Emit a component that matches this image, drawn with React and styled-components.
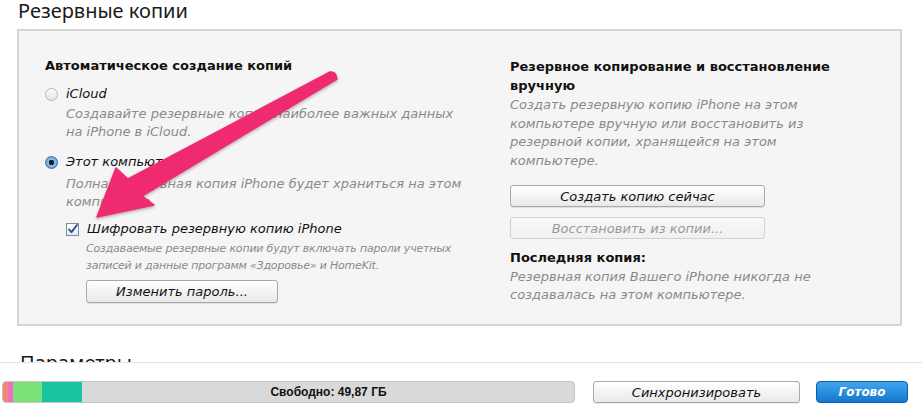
import styled, { createGlobalStyle } from "styled-components";

const Global = createGlobalStyle`
  html, body {
    margin: 0;
    padding: 0;
    background: #ffffff;
    overflow: hidden;
  }
  body {
    font-family: "DejaVu Sans", Verdana, sans-serif;
    color: #111;
  }
`

const Page = styled.div`
  position: relative;
  width: 922px;
  height: 413px;
  display: flex;
  flex-direction: column;
  overflow: hidden;
`

const Content = styled.div`
  height: 362px;
  overflow: hidden;
  flex-shrink: 0;
`

const Title = styled.h1`
  margin: 0 0 0 18px;
  font-family: "Noto Sans", "Open Sans", sans-serif;
  font-weight: 400;
  font-size: 20px;
  line-height: 22px;
  color: #1a1a1a;
`

const Panel = styled.div`
  margin: 7px 0 0 17px;
  width: 885px;
  height: 297px;
  box-sizing: border-box;
  background: #f5f5f5;
  border: 2px solid #d5d5d5;
  padding: 26px 0 0 26px;
  display: grid;
  grid-template-columns: 465px 1fr;
`

const Column = styled.div`
  display: flex;
  flex-direction: column;
  align-items: flex-start;
`

const Heading = styled.div`
  font-weight: 700;
  font-size: 13px;
  line-height: ${({ $lh }) => $lh || 18}px;
  color: #111;
  margin-top: ${({ $mt }) => $mt || 0}px;
  width: ${({ $w }) => ($w ? `${$w}px` : "auto")};
`

const Option = styled.label`
  display: flex;
  align-items: center;
  gap: ${({ $gap }) => $gap || 8}px;
  margin-top: ${({ $mt }) => $mt || 0}px;
  margin-left: ${({ $ml }) => $ml || 0}px;
  font-style: italic;
  font-size: 13px;
  line-height: 18px;
  color: #111;
`

const Radio = styled.span`
  width: 13px;
  height: 13px;
  border-radius: 50%;
  box-sizing: border-box;
  border: 1px solid ${({ $on }) => ($on ? "#3d6a9c" : "#b4b4b4")};
  background: ${({ $on }) =>
    $on
      ? "radial-gradient(circle, #0c2036 0 2.5px, #8fc0ea 3px, #4d8cc9 100%)"
      : "linear-gradient(#fdfdfd, #e6e6e6)"};
  flex-shrink: 0;
`

const Check = styled.span`
  width: 13px;
  height: 13px;
  box-sizing: border-box;
  border: 1px solid #7a8ea6;
  background: linear-gradient(#ffffff, #e4e9ef);
  display: flex;
  align-items: center;
  justify-content: center;
  flex-shrink: 0;
`

const Desc = styled.div`
  font-style: italic;
  font-size: ${({ $small }) => ($small ? 11 : 13)}px;
  line-height: ${({ $lh }) => $lh || 18}px;
  color: #8a8a8a;
  margin-top: ${({ $mt }) => $mt || 0}px;
  margin-left: ${({ $ml }) => $ml || 0}px;
  width: ${({ $w }) => $w || 400}px;
  letter-spacing: ${({ $small }) => ($small ? "-0.2px" : "0")};
`

const Button = styled.button`
  width: ${({ $w }) => $w}px;
  height: ${({ $h }) => $h || 22}px;
  margin-top: ${({ $mt }) => $mt || 0}px;
  margin-left: ${({ $ml }) => $ml || 0}px;
  padding: 0;
  box-sizing: border-box;
  border: 1px solid ${({ $disabled }) => ($disabled ? "#d2d2d2" : "#a9a9a9")};
  border-radius: 3px;
  background: ${({ $disabled }) =>
    $disabled ? "linear-gradient(#f8f8f8, #f0f0f0)" : "linear-gradient(#ffffff, #e9e9e9)"};
  box-shadow: ${({ $disabled }) => ($disabled ? "none" : "0 1px 0 rgba(0,0,0,0.08)")};
  font-family: "DejaVu Sans", Verdana, sans-serif;
  font-style: italic;
  font-size: 13px;
  color: ${({ $disabled }) => ($disabled ? "#9a9a9a" : "#111")};
  flex-shrink: 0;
`

const SectionTitle = styled.h2`
  margin: 23px 0 0 20px;
  font-family: "Noto Sans", "Open Sans", sans-serif;
  font-weight: 400;
  font-size: 20px;
  line-height: 27px;
  color: #1a1a1a;
`

const BottomBar = styled.div`
  flex: 1;
  border-top: 1px solid #e4e4e4;
  background: #fff;
  display: flex;
  align-items: flex-start;
  padding: 18px 0 0 2px;
  box-sizing: border-box;
`

const Storage = styled.div`
  width: 573px;
  height: 22px;
  box-sizing: border-box;
  border: 1px solid #c4c4c4;
  border-radius: 4px;
  background: #d9d9d9;
  overflow: hidden;
  position: relative;
  display: flex;
`

const Segment = styled.div`
  width: ${({ $w }) => $w}px;
  background: ${({ $c }) => $c};
  flex-shrink: 0;
`

const FreeLabel = styled.div`
  position: absolute;
  inset: 0;
  display: flex;
  align-items: center;
  justify-content: center;
  padding-left: 80px;
  font-family: "Liberation Sans", Arial, sans-serif;
  font-weight: 700;
  font-size: 12px;
  color: #111;
`

const DoneButton = styled.button`
  width: 92px;
  height: 22px;
  margin-left: 16px;
  padding: 0;
  border: 1px solid #0d5fa8;
  border-radius: 4px;
  background: linear-gradient(#3fa6ee, #1577d0);
  color: #fff;
  font-family: "DejaVu Sans", Verdana, sans-serif;
  font-style: italic;
  font-weight: 700;
  font-size: 12px;
`

const ArrowLayer = styled.svg`
  position: absolute;
  left: 0;
  top: 0;
  pointer-events: none;
`

const segments = [
  { w: 5, c: "#ef8a72" },
  { w: 5, c: "#ee6fc0" },
  { w: 29, c: "#7ce37b" },
  { w: 40, c: "#17c4a0" },
]

const App = () => {
  return (
    <Page>
      <Global />
      <Content>
        <Title>Резервные копии</Title>
        <Panel>
          <Column>
            <Heading>Автоматическое создание копий</Heading>
            <Option $mt={10}>
              <Radio />
              iCloud
            </Option>
            <Desc $mt={2} $ml={21} $w={400}>
              Создавайте резервные копии наиболее важных данных на iPhone в iCloud.
            </Desc>
            <Option $mt={12}>
              <Radio $on />
              Этот компьютер
            </Option>
            <Desc $mt={4} $ml={21} $w={430}>
              Полная резервная копия iPhone будет храниться на этом компьютере.
            </Desc>
            <Option $mt={9} $ml={21} $gap={8}>
              <Check>
                <svg width="13" height="13" viewBox="0 0 13 13">
                  <path d="M2.5 6.5 L5.3 9.6 L11.8 1.2" fill="none" stroke="#1d4d86" strokeWidth="2.2" strokeLinecap="round" strokeLinejoin="round" />
                </svg>
              </Check>
              Шифровать резервную копию iPhone
            </Option>
            <Desc $small $lh={17} $mt={2} $ml={41} $w={380}>
              Создаваемые резервные копии будут включать пароли учетных записей и данные программ «Здоровье» и HomeKit.
            </Desc>
            <Button $w={192} $h={23} $mt={6} $ml={41}>Изменить пароль...</Button>
          </Column>
          <Column>
            <Heading $lh={19} $w={340}>
              Резервное копирование и восстановление вручную
            </Heading>
            <Desc $lh={18.5} $mt={1} $w={320}>
              Создать резервную копию iPhone на этом компьютере вручную или восстановить из резервной копии, хранящейся на этом компьютере.
            </Desc>
            <Button $w={255} $mt={15}>Создать копию сейчас</Button>
            <Button $w={255} $mt={10} $disabled>Восстановить из копии...</Button>
            <Heading $mt={10}>Последняя копия:</Heading>
            <Desc $mt={1} $w={320}>
              Резервная копия Вашего iPhone никогда не создавалась на этом компьютере.
            </Desc>
          </Column>
        </Panel>
        <SectionTitle>Параметры</SectionTitle>
      </Content>
      <BottomBar>
        <Storage>
          {segments.map((s, i) => (
            <Segment key={i} $w={s.w} $c={s.c} />
          ))}
          <FreeLabel>Свободно: 49,87 ГБ</FreeLabel>
        </Storage>
        <Button $w={207} $ml={18}>Синхронизировать</Button>
        <DoneButton>Готово</DoneButton>
      </BottomBar>
      <ArrowLayer width="922" height="413" viewBox="0 0 922 413">
        <defs>
          <filter id="sh" x="-20%" y="-20%" width="140%" height="140%">
            <feDropShadow dx="0" dy="1.5" stdDeviation="1.5" floodColor="#000" floodOpacity="0.3" />
          </filter>
        </defs>
        <path
          d="M330 72 Q336 71 337 79 L142 196 L154 205 L97 217 L116 168 L128 179 Z"
          fill="#ef2b6f"
          stroke="#ef2b6f"
          strokeWidth="1.5"
          strokeLinejoin="round"
          filter="url(#sh)"
        />
      </ArrowLayer>
    </Page>
  )
}

export default App
